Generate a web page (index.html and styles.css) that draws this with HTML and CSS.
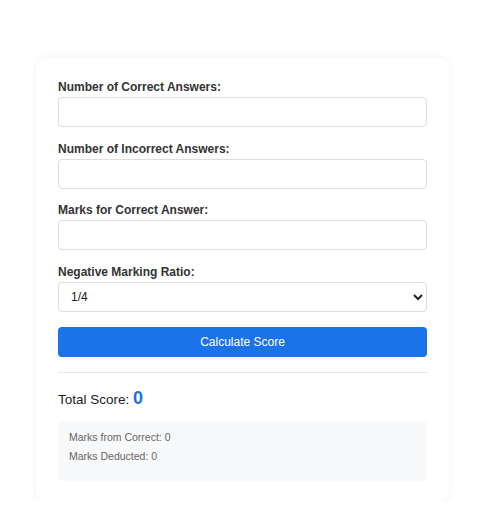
FILE: index.html
```html
<!DOCTYPE html>
<html lang="en">
<head>
    <meta charset="UTF-8">
    <meta name="viewport" content="width=device-width, initial-scale=1.0">
    <title>Negative Marking Calculator</title>
    <link rel="stylesheet" href="styles.css">
</head>
<body>
    <div class="calculator">
        <div class="form-group">
            <label for="correct">Number of Correct Answers:</label>
            <input type="number" id="correct">
        </div>

        <div class="form-group">
            <label for="incorrect">Number of Incorrect Answers:</label>
            <input type="number" id="incorrect">
        </div>

        <div class="form-group">
            <label for="marks">Marks for Correct Answer:</label>
            <input type="number" id="marks">
        </div>

        <div class="form-group">
            <label for="ratio">Negative Marking Ratio:</label>
            <select id="ratio">
                <option value="0.25">1/4</option>
                <option value="0.33">1/3</option>
                <option value="0.5">1/2</option>
            </select>
        </div>

        <button class="calc-btn">Calculate Score</button>

        <div class="result">
            <div class="total">Total Score: <span id="total">0</span></div>
            <div class="breakdown">
                <p>Marks from Correct: <span id="plus">0</span></p>
                <p>Marks Deducted: <span id="minus">0</span></p>
            </div>
        </div>
    </div>

    <script>
        document.querySelector('.calc-btn').addEventListener('click', () => {
            const correct = Number(document.getElementById('correct').value) || 0;
            const incorrect = Number(document.getElementById('incorrect').value) || 0;
            const marks = Number(document.getElementById('marks').value) || 0;
            const ratio = Number(document.getElementById('ratio').value);

            const plus = correct * marks;
            const minus = incorrect * marks * ratio;

            document.getElementById('plus').textContent = plus;
            document.getElementById('minus').textContent = minus;
            document.getElementById('total').textContent = plus - minus;
        });
    </script>
</body>
</html>
```

FILE: styles.css
```css
* {
    margin: 0;
    padding: 0;
    box-sizing: border-box;
}

body {
    font-family: "Liberation Sans", Arial, sans-serif;
    background: #fff;
    color: #333;
    padding: 58px 35px 0 36px;
}

.calculator {
    width: 413px;
    background: #fff;
    border-radius: 10px;
    padding: 22px 22px 20px 22px;
    box-shadow: 0 0 8px rgba(0, 0, 0, 0.06);
}

.form-group {
    margin-bottom: 14.67px;
}

.form-group label {
    display: block;
    font-size: 12px;
    font-weight: bold;
    line-height: 14px;
    margin-bottom: 3px;
    color: #333;
}

.form-group input,
.form-group select {
    width: 100%;
    height: 30px;
    border: 1px solid #ddd;
    border-radius: 4px;
    background: #fff;
    font-family: inherit;
    font-size: 12px;
    padding: 0 8px;
    color: #222;
}

.calc-btn {
    display: block;
    width: 100%;
    height: 30px;
    border: none;
    border-radius: 4px;
    background-color: #1a73e8;
    color: white;
    font-family: inherit;
    font-size: 12px;
    cursor: pointer;
}

.calc-btn:hover {
    background-color: #1666cf;
}

.result {
    margin-top: 15px;
    border-top: 1px solid #e8e8e8;
    padding-top: 15px;
}

.total {
    font-size: 13.5px;
    line-height: 21px;
    color: #222;
}

.total span {
    font-size: 18px;
    font-weight: bold;
    color: #1a73e8;
}

.breakdown {
    margin-top: 11px;
    background: #f8f9fa;
    border-radius: 4px;
    padding: 7px 11px 15px;
}

.breakdown p {
    font-size: 10.5px;
    line-height: 19px;
    color: #666;
}
```
